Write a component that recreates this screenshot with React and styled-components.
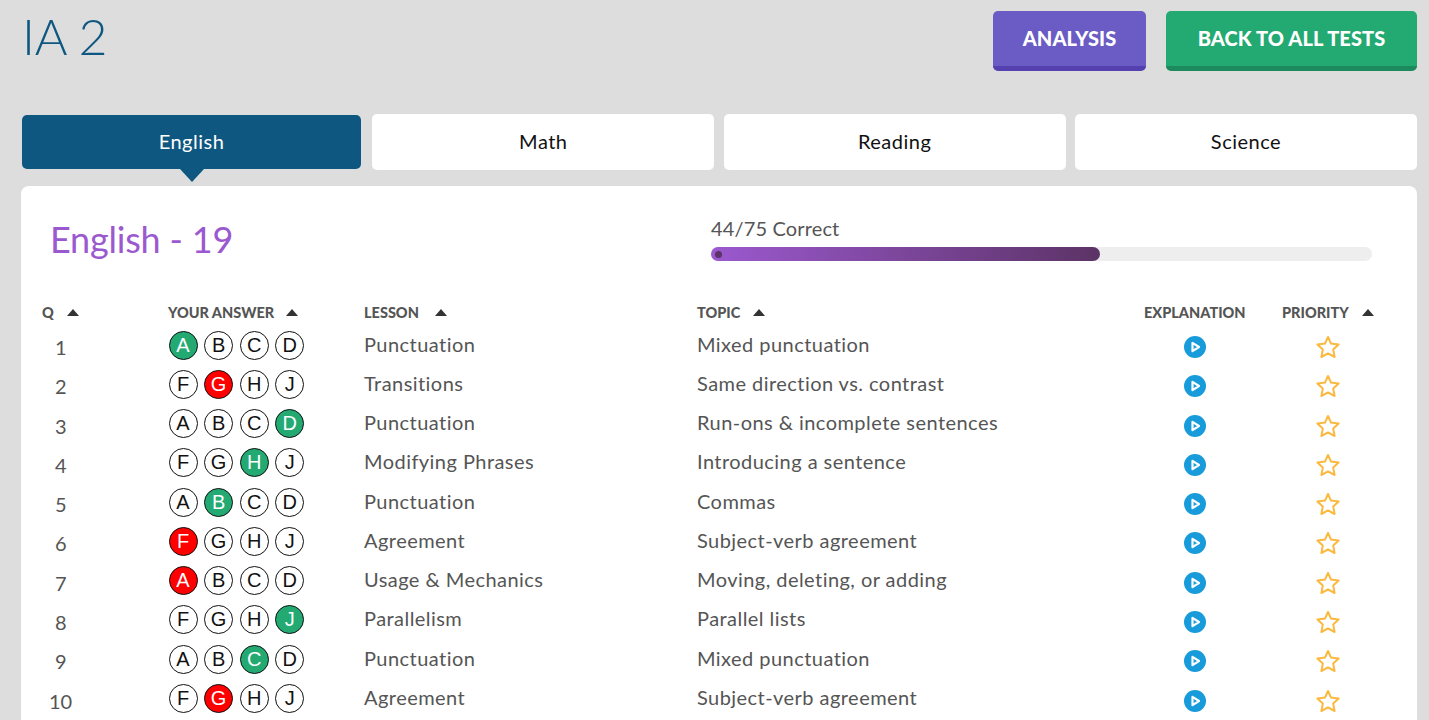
import React from 'react';
import styled, { createGlobalStyle } from 'styled-components';

const Global = createGlobalStyle`
  html, body { margin: 0; padding: 0; height: 100%; overflow: hidden; background: #dddddd; }
  * { box-sizing: border-box; }
  body { font-family: Lato, "Open Sans", sans-serif; color: #555; }
`;
const Page = styled.div`height: 720px; overflow: hidden; padding: 11px 12px 0 21px;`;
const Header = styled.header`display: flex; justify-content: space-between; align-items: flex-start; height: 103px;`;
const Title = styled.h1`margin: 0 0 0 1px; font-size: 50px; line-height: 50px; font-weight: 300; color: #0e5781; letter-spacing: -0.4px;`;
const Actions = styled.div`display: flex; gap: 20px;`;
const ActionButton = styled.button`
  width: ${p => p.$w}px; height: 60px; padding: 0 0 2px; border: 0; border-bottom: 5px solid ${p => p.$edge};
  border-radius: 5px; background: ${p => p.$bg}; color: #fff; font: 900 20px Lato, sans-serif;
  letter-spacing: 0.1px; text-transform: uppercase;
`;
const Tabs = styled.nav`display: grid; grid-template-columns: repeat(4, 1fr); column-gap: 9.33px; height: 56px;`;
const Tab = styled.div`
  position: relative; display: flex; align-items: center; justify-content: center; padding-bottom: 2px;
  border-radius: 5px; font-size: 20px; letter-spacing: 0.5px; color: ${p => p.$active ? '#fff' : '#111'};
  background: ${p => p.$active ? '#0e5781' : '#fff'};
  margin: ${p => p.$active ? '1px 2px 1px 1px' : '0'};
  ${p => p.$active && `
    &::after { content: ''; position: absolute; left: 50%; top: 100%; margin-left: -12px;
      border: 12px solid transparent; border-top: 13px solid #0e5781; border-bottom: 0; }
  `}
`;
const Card = styled.section`margin-top: 16px; background: #fff; border-radius: 8px 8px 0 0; height: 600px; padding: 0 0 0 21px;`;
const Summary = styled.div`display: flex; height: 111px; padding: 25px 45px 0 9px; justify-content: space-between;`;
const CardTitle = styled.h2`margin: 4px 0 0 -1px; font-size: 36px; line-height: 48px; font-weight: 400; color: #9b59d0; letter-spacing: -0.2px;`;
const Progress = styled.div`width: 661px;`;
const ProgressLabel = styled.div`font-size: 20px; line-height: 34px; height: 36px; letter-spacing: 0.15px; color: #555;`;
const Track = styled.div`height: 14px; border-radius: 7px; background: #eeeeee;`;
const Fill = styled.div`
  position: relative; height: 100%; border-radius: 7px; background: linear-gradient(90deg, #9b59cf, #5c3366);
  &::before { content: ''; position: absolute; left: 4px; top: 3.5px; width: 7px; height: 7px; border-radius: 50%; background: #5c3366; }
`;
const Grid = `display: grid; grid-template-columns: 126px 196px 333px 447px 138px 1fr; align-items: center;`;
const HeadRow = styled.div`${Grid} height: 30px;`;
const HeadCell = styled.div`display: flex; align-items: center; font-size: 14.5px; font-weight: 900; color: #555; white-space: nowrap;`;
const Sort = styled.span`width: 0; height: 0; margin-left: ${p => p.$gap}px; border: 6px solid transparent; border-bottom: 7px solid #333; border-top: 0;`;
const Row = styled.div`${Grid} height: 39.27px;`;
const Num = styled.div`padding: 1px 0 0 ${p => p.$wide ? 7 : 13}px; font-size: 20px; color: #555;`;
const Bubbles = styled.div`display: flex; gap: 6.6px; margin: -3px 0 0 0.5px;`;
const Bubble = styled.span`
  width: 29px; height: 29px; border-radius: 50%; border: 1.5px solid #111; display: flex; align-items: center; justify-content: center;
  font: 20px "Liberation Sans", Arial, sans-serif; color: ${p => p.$state ? '#fff' : '#111'};
  background: ${p => p.$state === 'right' ? '#22aa72' : p.$state === 'wrong' ? '#fe0000' : '#fff'};
`;
const Text = styled.div`font-size: 20px; letter-spacing: 0.45px; color: #555; margin-top: -6px; white-space: nowrap;`;
const IconCell = styled.div`display: flex; justify-content: center; padding-top: 1px; width: ${p => p.$w}px;`;

const Play = () => (
  <svg width="22" height="22" viewBox="0 0 22 22">
    <circle cx="11" cy="11" r="11" fill="#189bdb" />
    <path d="M8.5 6.8 L15 11 L8.5 15.2 Z" fill="none" stroke="#fff" strokeWidth="2.2" strokeLinejoin="round" />
  </svg>
);
const Star = () => (
  <svg width="24" height="24" viewBox="0 0 24 24">
    <path d="M12 2 L15 8.6 L22.6 9.6 L17.2 14.6 L18.6 22 L12 18.4 L5.4 22 L6.8 14.6 L1.4 9.6 L9 8.6 Z" fill="none" stroke="#fbb940" strokeWidth="2" strokeLinejoin="round" />
  </svg>
);

const rows = [
  [1, 'ABCD', 0, 'right', 'Punctuation', 'Mixed punctuation'],
  [2, 'FGHJ', 1, 'wrong', 'Transitions', 'Same direction vs. contrast'],
  [3, 'ABCD', 3, 'right', 'Punctuation', 'Run-ons & incomplete sentences'],
  [4, 'FGHJ', 2, 'right', 'Modifying Phrases', 'Introducing a sentence'],
  [5, 'ABCD', 1, 'right', 'Punctuation', 'Commas'],
  [6, 'FGHJ', 0, 'wrong', 'Agreement', 'Subject-verb agreement'],
  [7, 'ABCD', 0, 'wrong', 'Usage & Mechanics', 'Moving, deleting, or adding'],
  [8, 'FGHJ', 3, 'right', 'Parallelism', 'Parallel lists'],
  [9, 'ABCD', 2, 'right', 'Punctuation', 'Mixed punctuation'],
  [10, 'FGHJ', 1, 'wrong', 'Agreement', 'Subject-verb agreement'],
];

export default function App() {
  return (
    <Page>
      <Global />
      <Header>
        <Title>IA 2</Title>
        <Actions>
          <ActionButton $w={153} $bg="#6a5cc4" $edge="#5540b0">Analysis</ActionButton>
          <ActionButton $w={251} $bg="#22aa72" $edge="#1c8a5c">Back to all tests</ActionButton>
        </Actions>
      </Header>
      <Tabs>
        <Tab $active>English</Tab>
        <Tab>Math</Tab>
        <Tab>Reading</Tab>
        <Tab>Science</Tab>
      </Tabs>
      <Card>
        <Summary>
          <CardTitle>English - 19</CardTitle>
          <Progress>
            <ProgressLabel>44/75 Correct</ProgressLabel>
            <Track><Fill style={{ width: `${(44 / 75) * 100 + 0.15}%` }} /></Track>
          </Progress>
        </Summary>
        <HeadRow>
          <HeadCell>Q<Sort $gap={13} /></HeadCell>
          <HeadCell>YOUR ANSWER<Sort $gap={12} /></HeadCell>
          <HeadCell>LESSON<Sort $gap={16} /></HeadCell>
          <HeadCell>TOPIC<Sort $gap={13} /></HeadCell>
          <HeadCell>EXPLANATION</HeadCell>
          <HeadCell>PRIORITY<Sort $gap={13} /></HeadCell>
        </HeadRow>
        {rows.map(([n, letters, pick, state, lesson, topic]) => (
          <Row key={n}>
            <Num $wide={n > 9}>{n}</Num>
            <Bubbles>
              {letters.split('').map((l, i) => (
                <Bubble key={l} $state={i === pick ? state : undefined}>{l}</Bubble>
              ))}
            </Bubbles>
            <Text>{lesson}</Text>
            <Text>{topic}</Text>
            <IconCell $w={102}><Play /></IconCell>
            <IconCell $w={92}><Star /></IconCell>
          </Row>
        ))}
      </Card>
    </Page>
  );
}
